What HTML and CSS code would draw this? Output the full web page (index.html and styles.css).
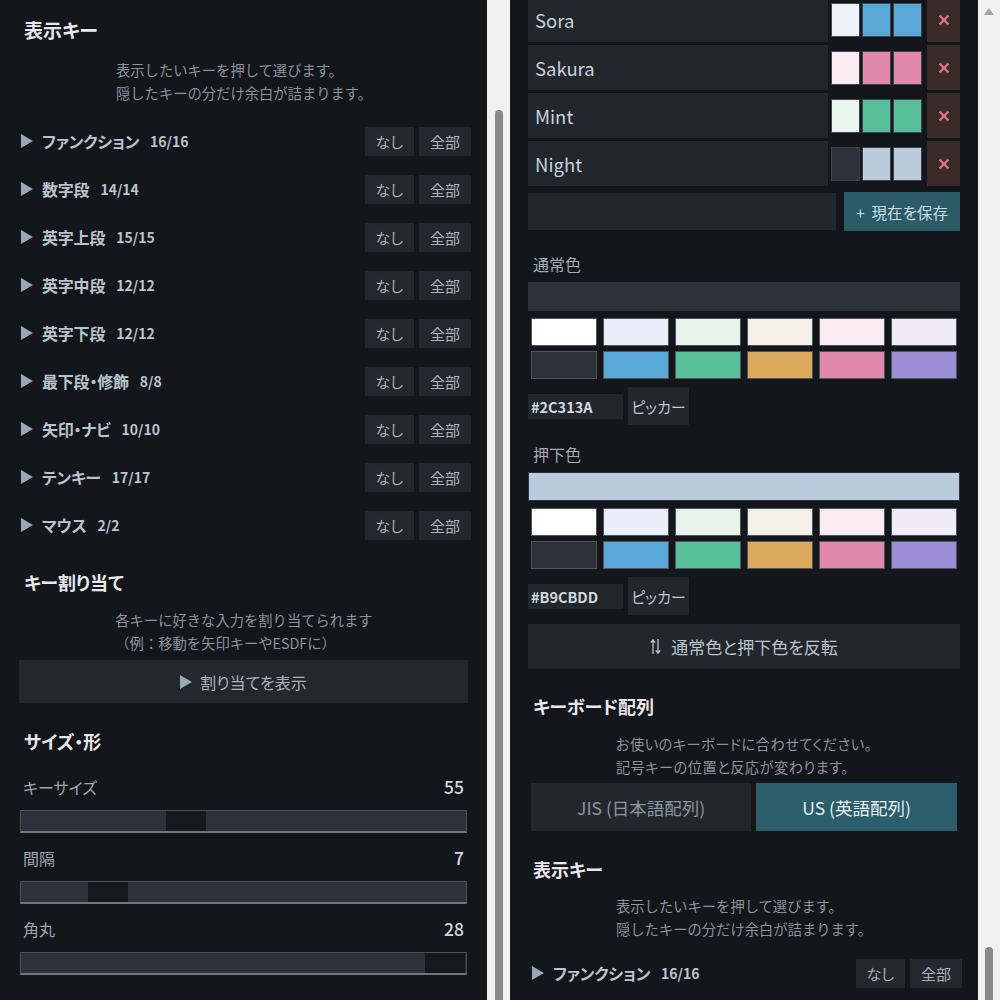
FILE: index.html
```html
<!DOCTYPE html>
<html lang="ja">

<head>
  <meta charset="utf-8">
  <title>キー表示設定</title>
  <link rel="stylesheet" href="styles.css">
</head>

<body>
  <div class="panel left">
    <h2>表示キー</h2>
    <p class="desc">表示したいキーを押して選びます。<br>隠したキーの分だけ余白が詰まります。</p>
    <div class="keylist">
      <div class="krow"><i class="tri"></i><span class="kname">ファンクション</span><span class="kcount">16/16</span><button class="mini">なし</button><button class="mini">全部</button></div>
      <div class="krow"><i class="tri"></i><span class="kname">数字段</span><span class="kcount">14/14</span><button class="mini">なし</button><button class="mini">全部</button></div>
      <div class="krow"><i class="tri"></i><span class="kname">英字上段</span><span class="kcount">15/15</span><button class="mini">なし</button><button class="mini">全部</button></div>
      <div class="krow"><i class="tri"></i><span class="kname">英字中段</span><span class="kcount">12/12</span><button class="mini">なし</button><button class="mini">全部</button></div>
      <div class="krow"><i class="tri"></i><span class="kname">英字下段</span><span class="kcount">12/12</span><button class="mini">なし</button><button class="mini">全部</button></div>
      <div class="krow"><i class="tri"></i><span class="kname">最下段・修飾</span><span class="kcount">8/8</span><button class="mini">なし</button><button class="mini">全部</button></div>
      <div class="krow"><i class="tri"></i><span class="kname">矢印・ナビ</span><span class="kcount">10/10</span><button class="mini">なし</button><button class="mini">全部</button></div>
      <div class="krow"><i class="tri"></i><span class="kname">テンキー</span><span class="kcount">17/17</span><button class="mini">なし</button><button class="mini">全部</button></div>
      <div class="krow"><i class="tri"></i><span class="kname">マウス</span><span class="kcount">2/2</span><button class="mini">なし</button><button class="mini">全部</button></div>
    </div>

    <h2 class="sec">キー割り当て</h2>
    <p class="desc tight">各キーに好きな入力を割り当てられます<br>（例：移動を矢印キーやESDFに）</p>
    <button class="wide"><i class="tri"></i>割り当てを表示</button>

    <h2 class="sec2">サイズ・形</h2>
    <div class="slabel"><span>キーサイズ</span><b>55</b></div>
    <div class="track"><div class="knob" style="margin-left:145px"></div></div>
    <div class="slabel"><span>間隔</span><b>7</b></div>
    <div class="track"><div class="knob" style="margin-left:67px"></div></div>
    <div class="slabel"><span>角丸</span><b>28</b></div>
    <div class="track"><div class="knob" style="margin-left:404px"></div></div>
  </div>
  <div class="gutter"><div class="thumb lthumb"></div></div>

  <div class="panel right">
    <div class="presets">
      <div class="prow"><input class="pname" value="Sora"><span class="sw" style="background:#eef3f9"></span><span class="sw" style="background:#5aa8d8"></span><span class="sw" style="background:#5aa8d8"></span><button class="del"><svg width="12" height="12" viewBox="0 0 12 12"><path d="M1.5 1.5l9 9M10.5 1.5l-9 9" stroke="currentColor" stroke-width="2.2"/></svg></button></div>
      <div class="prow"><input class="pname" value="Sakura"><span class="sw" style="background:#f9edf2"></span><span class="sw" style="background:#e088ab"></span><span class="sw" style="background:#e088ab"></span><button class="del"><svg width="12" height="12" viewBox="0 0 12 12"><path d="M1.5 1.5l9 9M10.5 1.5l-9 9" stroke="currentColor" stroke-width="2.2"/></svg></button></div>
      <div class="prow"><input class="pname" value="Mint"><span class="sw" style="background:#e9f5ef"></span><span class="sw" style="background:#57c09a"></span><span class="sw" style="background:#57c09a"></span><button class="del"><svg width="12" height="12" viewBox="0 0 12 12"><path d="M1.5 1.5l9 9M10.5 1.5l-9 9" stroke="currentColor" stroke-width="2.2"/></svg></button></div>
      <div class="prow"><input class="pname" value="Night"><span class="sw" style="background:#2c313a"></span><span class="sw" style="background:#b9cbdd"></span><span class="sw" style="background:#b9cbdd"></span><button class="del"><svg width="12" height="12" viewBox="0 0 12 12"><path d="M1.5 1.5l9 9M10.5 1.5l-9 9" stroke="currentColor" stroke-width="2.2"/></svg></button></div>
    </div>
    <div class="saverow">
      <input class="newname" value="">
      <button class="save">+&nbsp; 現在を保存</button>
    </div>

    <div class="clabel">通常色</div>
    <div class="cbar" style="background:#2c313a"></div>
    <div class="palette">
      <span style="background:#ffffff"></span><span style="background:#e9eff8"></span><span style="background:#e9f3ee"></span><span style="background:#f6f1e8"></span><span style="background:#f9edf2"></span><span style="background:#efebf7"></span>
      <span style="background:#2c313a"></span><span style="background:#5aa8d8"></span><span style="background:#57c09a"></span><span style="background:#d9a85a"></span><span style="background:#e088ab"></span><span style="background:#9b8ed6"></span>
    </div>
    <div class="hexrow"><input class="hex" value="#2C313A"><button class="picker">ピッカー</button></div>

    <div class="clabel">押下色</div>
    <div class="cbar" style="background:#b9cbdd"></div>
    <div class="palette">
      <span style="background:#ffffff"></span><span style="background:#e9eff8"></span><span style="background:#e9f3ee"></span><span style="background:#f6f1e8"></span><span style="background:#f9edf2"></span><span style="background:#efebf7"></span>
      <span style="background:#2c313a"></span><span style="background:#5aa8d8"></span><span style="background:#57c09a"></span><span style="background:#d9a85a"></span><span style="background:#e088ab"></span><span style="background:#9b8ed6"></span>
    </div>
    <div class="hexrow"><input class="hex" value="#B9CBDD"><button class="picker">ピッカー</button></div>

    <button class="invert"><svg width="11" height="17" viewBox="0 0 11 17"><path d="M3 16V2M0.8 4.6L3 1.8L5.2 4.6M8 1v14M5.8 12.4L8 15.2L10.2 12.4" stroke="currentColor" fill="none" stroke-width="1.3"/></svg>通常色と押下色を反転</button>

    <h2 class="sec3">キーボード配列</h2>
    <p class="desc tight narrow">お使いのキーボードに合わせてください。<br>記号キーの位置と反応が変わります。</p>
    <div class="seg">
      <button>JIS (日本語配列)</button>
      <button class="on">US (英語配列)</button>
    </div>

    <h2 class="sec4">表示キー</h2>
    <p class="desc short">表示したいキーを押して選びます。<br>隠したキーの分だけ余白が詰まります。</p>
    <div class="keylist last">
      <div class="krow"><i class="tri"></i><span class="kname">ファンクション</span><span class="kcount">16/16</span><button class="mini">なし</button><button class="mini">全部</button></div>
    </div>
  </div>
  <div class="gutter end"><i class="up"></i><div class="thumb rthumb"></div></div>
</body>

</html>
```

FILE: styles.css
```css
* {
  box-sizing: border-box;
}

body {
  margin: 0;
  height: 1000px;
  overflow: hidden;
  display: flex;
  background: #f0f0f0;
  color: #c9d1d9;
  font-family: "Noto Sans CJK JP", sans-serif;
  font-feature-settings: "palt";
}

button,
input {
  font: inherit;
  color: inherit;
  border: 0;
  outline: 0;
  margin: 0;
  padding: 0;
  white-space: nowrap;
}

.panel {
  height: 1000px;
  overflow: hidden;
  background: #13161b;
}

.panel.left {
  width: 487px;
  padding: 18px 18px 0 19px;
}

.panel.right {
  width: 468px;
  padding: 0 18px;
}

/* scrollbars */
.gutter {
  width: 23px;
  display: flex;
  flex-direction: column;
  align-items: center;
}

.gutter.end {
  width: 22px;
}

.thumb {
  width: 8px;
  border-radius: 4px;
  background: #8a8a8a;
  flex: none;
}

.lthumb {
  margin-top: 110px;
  height: 900px;
}

.up {
  margin-top: 8px;
  border-left: 5px solid transparent;
  border-right: 5px solid transparent;
  border-bottom: 7px solid #a3a3a3;
}

.rthumb {
  margin-top: 932px;
  height: 70px;
}

/* headings */
h2 {
  margin: 0 0 0 5px;
  font-size: 18px;
  line-height: 24px;
  font-weight: 700;
  color: #e6e8ea;
}

h2:first-child {
  font-size: 19px;
}

h2.sec {
  margin-top: 21px;
}

h2.sec2 {
  margin-top: 26px;
}

h2.sec3 {
  margin-top: 25px;
}

h2.sec4 {
  margin-top: 26px;
}

.desc {
  width: fit-content;
  margin: 16px auto 0;
  font-size: 14.3px;
  line-height: 23px;
  color: #8b939c;
  font-feature-settings: normal;
}

.desc.tight {
  margin-top: 14px;
}

.desc.short {
  margin-top: 13px;
}

.desc.narrow {
  font-feature-settings: "palt";
  letter-spacing: 0.4px;
}

/* key groups */
.keylist {
  margin: 13px -2px 0 0;
}

.keylist.last {
  margin: 9px -2px 0 2px;
}

.krow {
  height: 48px;
  display: flex;
  align-items: center;
}

.tri {
  display: inline-block;
  border-left: 12px solid #9aa7b6;
  border-top: 7px solid transparent;
  border-bottom: 7px solid transparent;
  margin: 0 9px 0 2px;
}

.kname {
  font-size: 16px;
  font-weight: 700;
  color: #b9c3cd;
  letter-spacing: -0.2px;
}

.kcount {
  margin-left: 11px;
  margin-right: auto;
  font-size: 14px;
  font-weight: 700;
  color: #b9c3cd;
}

.mini {
  height: 29px;
  padding: 0 11px;
  margin-left: 5px;
  background: #23282f;
  color: #a9b1b9;
  font-size: 15px;
}

.wide {
  display: flex;
  align-items: center;
  justify-content: center;
  width: 449px;
  height: 43px;
  margin-top: 6px;
  background: #23282f;
  color: #a9b1b9;
  font-size: 16px;
}

.wide .tri {
  margin: 0 8px 0 0;
}

/* sliders */
.slabel {
  display: flex;
  justify-content: space-between;
  align-items: baseline;
  margin: 15px 5px 0 4px;
  font-size: 16px;
  line-height: 20px;
  color: #9ea6ae;
}

.sec2 + .slabel {
  margin-top: 24px;
}

.slabel b {
  font-size: 17.5px;
  font-weight: 500;
  color: #d4d8dc;
}

.track {
  display: flex;
  height: 23px;
  margin: 13px 2px 0 1px;
  background: #2c313a;
  border: 1px solid #4c525a;
  border-bottom: 2px solid #70767e;
}

.knob {
  width: 40px;
  background: #15181d;
}

/* presets */
.presets {
  margin-top: -3px;
  display: flex;
  flex-direction: column;
  gap: 3px;
}

.prow {
  height: 45px;
  display: flex;
  align-items: center;
  gap: 2px;
}

.pname {
  flex: 1;
  min-width: 0;
  height: 45px;
  margin-right: 1px;
  padding: 0 7px;
  background: #22272e;
  color: #c8d0d8;
  font-size: 18.5px;
}

.sw {
  width: 29px;
  height: 34px;
  border: 1px solid #3e434b;
}

.del {
  width: 33px;
  height: 45px;
  margin-left: 3px;
  display: flex;
  align-items: center;
  justify-content: center;
  background: #3a2a2a;
  color: #e27b7b;
}

.saverow {
  display: flex;
  align-items: center;
  margin-top: 6px;
  height: 39px;
}

.newname {
  flex: 1;
  height: 37px;
  background: #22272e;
}

.save {
  height: 39px;
  width: 116px;
  margin-left: 8px;
  background: #2b5b66;
  color: #c9dde2;
  font-size: 15.5px;
}

/* colour pickers */
.clabel {
  margin: 23px 0 0 5px;
  font-size: 16px;
  line-height: 20px;
  color: #a3abb3;
}

.hexrow + .clabel {
  margin-top: 19px;
}

.cbar {
  height: 29px;
  margin-top: 8px;
  border: 1px solid #2e333b;
}

.palette {
  display: grid;
  grid-template-columns: repeat(6, 1fr);
  gap: 5px 6px;
  margin: 7px 3px 0;
}

.palette span {
  height: 28px;
  border: 1px solid #50555d;
}

.hexrow {
  display: flex;
  align-items: center;
  margin-top: 8px;
}

.hex {
  width: 95px;
  height: 25px;
  padding: 0 3px;
  background: #22272e;
  color: #d3d8dd;
  font-size: 14.5px;
  font-weight: 700;
}

.picker {
  height: 38px;
  width: 61px;
  margin-left: 5px;
  background: #22272e;
  color: #bfc6cd;
  font-size: 15px;
}

.invert {
  display: flex;
  align-items: center;
  justify-content: center;
  gap: 10px;
  width: 100%;
  height: 45px;
  margin-top: 9px;
  background: #22272e;
  color: #bcc3ca;
  font-size: 17px;
}

/* layout switch */
.seg {
  display: flex;
  gap: 5px;
  margin: 5px 3px 0;
}

.seg button {
  flex: 1 1 auto;
  height: 48px;
  background: #22272e;
  color: #8e969f;
  font-size: 17.5px;
}

.seg button.on {
  background: #2b5e6a;
  color: #e8eef2;
}
```
